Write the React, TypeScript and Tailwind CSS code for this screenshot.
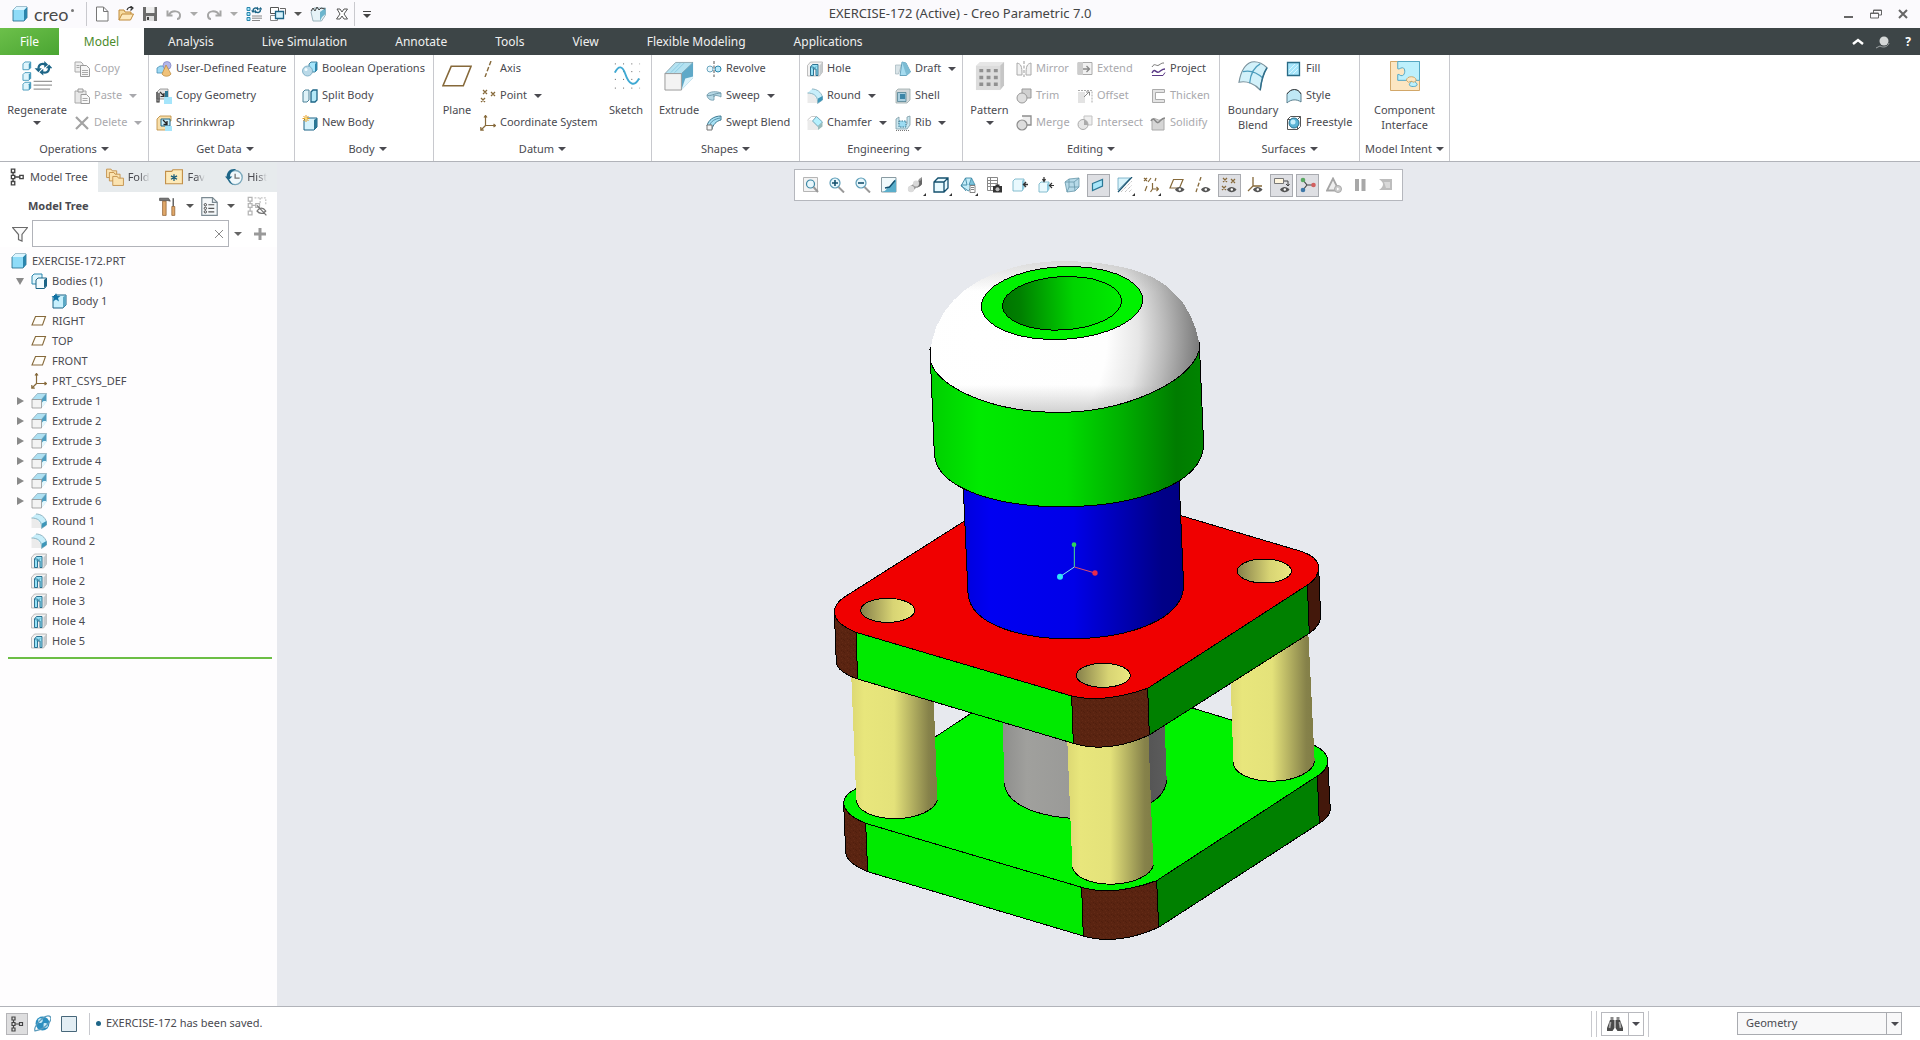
import { useState, type ReactNode } from 'react'
import { clsx } from 'clsx'

/* ---------- Icons (16 x 16 grid) ---------- */

const EDGE = '#1d6587'
const SKY = '#a5e5fb'
const BROWN = '#86693a'

const eye = (
  <>
    <path d="M6 12.500c2-3.500 7-3.500 9.500 0-2.500 3.500-7.500 3.500-9.500 0z" fill="#555" />
    <circle cx="10.800" cy="12.500" r="1.200" fill="#fff" />
  </>
)

const ICONS: Record<string, ReactNode> = {
  cube: (
    <>
      <path d="M1 4l3-3h11v10.500l-3 3.500H1z" fill="#8fdcf8" stroke={EDGE} strokeWidth=".8" />
      <path d="M12 4l3-3v10.500L12 15z" fill="#2b86ad" />
      <path d="M1 4l3-3h11l-3 3z" fill="#d9f5ff" />
    </>
  ),
  file: <path d="M2.500 1h7L14 5.500V15H2.500zM9.500 1v4.500H14" fill="#fff" stroke="#777" />,
  open: (
    <>
      <path d="M1 14V4h5l1 2h6v2" fill="#f7dca0" stroke="#c08a3a" />
      <path d="M1 14l3-6h11.500l-3 6z" fill="#fde9bd" stroke="#c08a3a" />
      <path d="M9 4c1-3 3-3 5-2M12.500 0L15 2l-2.500 2.500" fill="none" stroke="#333" strokeWidth="1.200" />
    </>
  ),
  save: (
    <>
      <path d="M1 1h14v14H1z" fill="#6b6b6b" />
      <path d="M4 1h8.500v6H4z" fill="#eee" />
      <path d="M4 10h8v5H4z" fill="#ddd" />
      <path d="M5 11h2v3H5z" fill="#444" />
    </>
  ),
  undo: <path d="M1.500 4.500v5h5M3 9c2-5 12-5 11 1-.3 2-1 3-3 3" fill="none" stroke="#a5a5a5" strokeWidth="2" />,
  redo: <path d="M14.500 4.500v5h-5M13 9C11 4 1 4 2 10c.3 2 1 3 3 3" fill="none" stroke="#a5a5a5" strokeWidth="2" />,
  regen: (
    <>
      <path d="M1 1.500h3v3H1zM1 6.500h3v3H1zM1 11.500h3v3H1z" fill={SKY} stroke="#2b86ad" />
      <path d="M7 5c0-3 3-4 5-2M14.500 3.500c0 3-3 4-5 2" fill="none" stroke={EDGE} strokeWidth="1.500" />
      <path d="M12.500 3.500h4L14.500 1zM5 4.500h4L7 7zM11 .5v4l2-1.500zM10 3.500v4L8 6z" fill={EDGE} />
      <path d="M6 10h10M6 12.200h10M6 14.500h8" stroke="#888" />
    </>
  ),
  windows: (
    <>
      <path d="M.5 1.500h8v6h-8z" fill="#fff" stroke="#555" />
      <path d="M.5 9.500h7v5h-7z" fill="#fff" stroke="#888" />
      <path d="M5.500 5.500h8v7h-8z" fill="#d4f2fc" stroke={EDGE} strokeWidth="1.300" />
      <path d="M10 2.500h5.500v6" fill="none" stroke="#666" />
    </>
  ),
  appearance: (
    <>
      <path d="M1 6l3-4h11.500v7l-4 6H3z" fill="#e6f3f7" stroke="#86a3ad" strokeWidth=".8" />
      <path d="M10 6l5.500-4v6L12 11l-2 4z" fill="#6cb5cd" />
      <path d="M1 5l2-3 2 3 2-4 2 3 2-2 4 1" fill="none" stroke="#444" />
    </>
  ),
  closeWin: (
    <path d="M3 3h3l2 3 2-3h3.500l-3.500 5 3.500 5H10l-2-3-2 3H2.500L6 8z" fill="#fff" stroke="#555" />
  ),
  copy: (
    <>
      <path d="M1 1h6l2 2v8H1z" fill="#eee" stroke="#aaa" />
      <path d="M6.500 4.500h6l3 3v8h-9z" fill="#f6f6f6" stroke="#999" />
      <path d="M8 9.500h6M8 11.500h6M8 13.500h6M2.500 4.500h3M2.500 6.500h3" stroke="#aaa" />
    </>
  ),
  paste: (
    <>
      <path d="M1 3h11v12H1z" fill="#e8e8e8" stroke="#aaa" />
      <path d="M4 1h5v3H4z" fill="#eee" stroke="#999" />
      <path d="M7 6.500h5.500l3 3v6H7z" fill="#f8f8f8" stroke="#999" />
      <path d="M8.500 10.500h5M8.500 12.500h5" stroke="#aaa" />
    </>
  ),
  del: <path d="M2 2l12 12M14 2L2 14" stroke="#a3a3a3" strokeWidth="2.200" />,
  udf: (
    <>
      <path d="M1 7l3-2h5v7H1z" fill="#9ed9f4" stroke="#4a90b5" strokeWidth=".8" />
      <circle cx="11" cy="4.500" r="4" fill="#b3b6e8" stroke="#7a7fc0" strokeWidth=".7" />
      <path d="M10 4l5 9c-2 3-7 3-9 0z" fill="#f0c27a" stroke="#b98535" strokeWidth=".7" />
    </>
  ),
  copyGeom: (
    <>
      <path d="M1 4l3-3h8v8l-3 2H1z" fill="#e3e3e3" stroke="#888" strokeWidth=".8" />
      <path d="M1 4v10h2V5M4 4l4 4M8 5v3.500H4.500" fill="none" stroke="#333" strokeWidth="1.200" />
      <path d="M8 9h8v7H8z" fill={SKY} />
      <path d="M9 3h3v6H9z" fill="#2b7896" />
    </>
  ),
  shrink: (
    <>
      <path d="M1 4l3-3h11v5h-4v9H1z" fill="#f8dfaa" stroke="#b98535" strokeWidth=".8" />
      <path d="M5 4h9v7H5z" fill="#c9effb" stroke={EDGE} />
      <path d="M7 5l4 4M11 6v3.500H7.500" fill="none" stroke="#222" strokeWidth="1.300" />
      <path d="M9 11h7v5H9z" fill={SKY} />
    </>
  ),
  boolean: (
    <>
      <path d="M7 3l2-2h6v8l-2 2H7z" fill="#a5e5fb" stroke={EDGE} strokeWidth=".8" />
      <path d="M13 3l2-2v8l-2 2z" fill="#2b86ad" />
      <circle cx="5.500" cy="10" r="5" fill="#b9d9e8" stroke="#6ea3bd" strokeWidth=".8" />
      <circle cx="4" cy="8.500" r="1.500" fill="#f2fbff" />
    </>
  ),
  split: (
    <>
      <path d="M1 4l2-2h4v10l-2 2H1z" fill="#dff2f8" stroke="#4d8299" />
      <path d="M9 4l2-2h4v10l-2 2H9z" fill="#b5e9f8" stroke={EDGE} strokeWidth="1.300" />
    </>
  ),
  newBody: (
    <>
      <path d="M2 5l2-2h11v9l-3 3H2z" fill="#d6f3fc" stroke={EDGE} />
      <path d="M12 5l3-2v9l-3 3z" fill="#2b7896" />
      <path d="M4 0v7M.5 3.500h7M1.500 1l5 5M6.500 1l-5 5" stroke="#e89a1c" />
      <circle cx="4" cy="3.500" r="1.300" fill="#ffe27a" />
    </>
  ),
  axis: <path d="M11 0L5 16" stroke={BROWN} strokeWidth="1.400" strokeDasharray="4.500 2" />,
  point: (
    <path
      d="M3 2l4 4M7 2L3 6M11 4l4 4M15 4l-4 4M1 10l4 4M5 10l-4 4"
      stroke={BROWN}
      strokeWidth="1.300"
    />
  ),
  csys: (
    <path
      d="M5.500 1v9.500H15M5.500 10.500l-4.500 4.500M4 2.500L5.500.5 7 2.500M13.500 9l2 1.500-2 1.500M.8 12v3.200h3"
      fill="none"
      stroke={BROWN}
      strokeWidth="1.200"
    />
  ),
  plane: <path d="M4.500 3.500H14.500L11.500 12H1z" fill="#fffdf8" stroke={BROWN} strokeWidth="1.100" />,
  revolve: (
    <>
      <circle cx="4" cy="8" r="3" fill="#e8f6fc" stroke="#6ba6bf" />
      <circle cx="12" cy="8" r="3" fill="#b9e9fa" stroke="#2b86ad" />
      <path d="M8 0v16" stroke="#555" strokeDasharray="3 1.500" />
    </>
  ),
  sweep: (
    <>
      <path d="M1 7c2-4 10-4 14-2v4c-4-2-7-2-7 0v3c-4 1-7-2-7-5z" fill="#b7d9e6" stroke="#6d97a8" strokeWidth=".8" />
      <path d="M1 7c3 2 8-2 14-2M8 9V7" fill="none" stroke="#6d97a8" />
    </>
  ),
  swept: (
    <>
      <path d="M1 11C2 5 8 1 15 1v4c-5 1-8 5-9 9z" fill="#a9e2f5" stroke="#3d7890" />
      <path d="M4 10c1-4 5-6 10-7" fill="none" stroke="#3d7890" strokeWidth=".8" />
      <path d="M1 10h5v5H1z" fill="#f5f5f5" stroke="#777" />
    </>
  ),
  extrude: (
    <>
      <path d="M1 6.500L6.500.5h9l-5 6z" fill="#aee0f2" stroke="#7796a2" strokeWidth=".6" />
      <path d="M10.500 6.500l5-6v8l-5 6z" fill="#4f9dbf" />
      <path d="M10.500 15l5-6v-1h-3l-2 2z" fill="#e4f7fd" />
      <path d="M1 6.500h9.500V15H1z" fill="#f3f3f3" stroke="#888" strokeWidth=".7" />
    </>
  ),
  hole: (
    <>
      <path d="M.5 4.500l3-3.500h12v10l-3 4H.5z" fill="#f2f2f2" stroke="#a5a5a5" strokeWidth=".7" />
      <path d="M12.500 4.500l3-3.500v10l-3 4z" fill="#c5cacc" />
      <path d="M3.500 14.500V6l2-2.500h5.500v11H9V8H6.500v6.500z" fill="#97e2f6" stroke={EDGE} strokeWidth=".9" />
      <path d="M3.500 6h3l-.5 2M6.500 8L9 5.500" fill="none" stroke={EDGE} strokeWidth=".7" />
    </>
  ),
  round: (
    <>
      <path d="M.5 5c5 0 9 3 10 10H.5z" fill="#ebebeb" />
      <path d="M.5 5L5 1c5 0 9 3 10.500 8l-5 6C10 8 6 5 .5 5z" fill="#c8eefa" />
      <path d="M5 1c5 0 9 3 10.500 8v3l-5 3.500V13c0-5-4-8-10-8" fill="none" stroke="#7aa4b4" strokeWidth=".8" />
      <path d="M11 10.500l4.500-2.500v4L11 15z" fill="#3d96b8" />
    </>
  ),
  chamfer: (
    <>
      <path d="M.5 5H4l7 6v4H.5z" fill="#ebebeb" />
      <path d="M5.500 6l4-4.500 6 5.500-4.500 4.500z" fill="#b5f0fd" stroke="#5b93a8" strokeWidth=".8" />
      <path d="M11 11.500L15.500 7v4.500L11 15z" fill="#9bb" />
      <path d="M.5 5l4-3.500h5" fill="none" stroke="#bbb" strokeWidth=".8" />
    </>
  ),
  draft: (
    <>
      <path d="M.5 4h6l-3 9h-3z" fill="#d9e4e8" stroke="#a1b4bb" strokeWidth=".7" />
      <path d="M7 1l4 1 4.500 9-4 3.500H5z" fill="#a6dcf0" stroke="#4c91ae" strokeWidth=".8" />
      <path d="M7 1l4.500 13.500L15.500 11 11 2z" fill="#7cbcd4" />
    </>
  ),
  shell: (
    <>
      <path d="M1 3l2-2h12v11l-3 3H1z" fill="#d5d9db" stroke="#9aa" strokeWidth=".8" />
      <path d="M2.500 4.500h8.500v9H2.500z" fill="#a9cfe0" stroke="#478" strokeWidth=".7" />
      <path d="M5 6h5v5H5z" fill="#3d86a8" />
    </>
  ),
  rib: (
    <>
      <path d="M1 4l3-2v7h8V2l3-1v9l-3 4H1z" fill="#c8e6ef" stroke="#7d9aa5" strokeWidth=".8" />
      <path d="M4 6h7v6H4z" fill="#9cdcf2" stroke="#3d7890" strokeDasharray="1.500 1" />
      <path d="M1 15.500h13" stroke="#777" strokeDasharray="1 1" />
    </>
  ),
  mirror: (
    <>
      <path d="M1 2c4 1 5 3 5 12H1zM15 2c-4 1-5 3-5 12h5z" fill="#f2f2f2" stroke="#aaa" />
      <path d="M8 0v16" stroke="#999" strokeDasharray="3 1.500" />
    </>
  ),
  extend: (
    <>
      <path d="M1 1.500h14v12H1z" fill="#f1f1f1" stroke="#aaa" />
      <path d="M1 1h5v13H1z" fill="#ccc" />
      <path d="M6 8h6M9.500 5l3 3-3 3" fill="none" stroke="#888" strokeWidth="1.300" />
    </>
  ),
  trim: (
    <>
      <path d="M6 1h9v9H6z" fill="#d0d0d0" stroke="#999" />
      <circle cx="6" cy="10" r="5" fill="#dedede" stroke="#999" />
    </>
  ),
  offset: (
    <>
      <path d="M1 4h7v11H1z" fill="#e3e3e3" />
      <path d="M1 2.500h14v12" fill="none" stroke="#aaa" strokeDasharray="2 1" />
      <path d="M7 9l5-5M9 4h3.500v3.500" fill="none" stroke="#888" />
    </>
  ),
  merge: (
    <>
      <path d="M6 1h9v9H9" fill="#eee" stroke="#8d8d8d" strokeWidth="1.300" />
      <circle cx="6" cy="10" r="5" fill="#ddd" stroke="#8d8d8d" strokeWidth="1.200" />
    </>
  ),
  intersect: (
    <>
      <path d="M7 1h8v9H7z" fill="#eee" stroke="#c3c3c3" />
      <circle cx="6" cy="9.500" r="5" fill="#e6e6e6" stroke="#aaa" />
      <path d="M7 5c3 0 4 3 4 5H7z" fill="#aaa" />
    </>
  ),
  project: (
    <>
      <path d="M2 6c3-5 4 0 7-2s3-2 5-2" fill="none" stroke="#777" />
      <path d="M2 12c3-6 4 1 7-1s3-3 6-3" fill="none" stroke="#5a3a86" strokeWidth="1.500" />
      <path d="M2 14.500h11l2-3" fill="none" stroke="#5a3a86" />
    </>
  ),
  thicken: <path d="M14.500 1.500h-12v13h12v-3h-9v-7h9z" fill="#e4e4e4" stroke="#aaa" />,
  solidify: (
    <>
      <path d="M2 5c3-5 6 4 12-2v12H2z" fill="#d6d6d6" stroke="#aaa" />
      <path d="M1 6c3-6 5 4 8 1 2-2 3-4 6-4" fill="none" stroke="#888" strokeWidth="1.600" />
    </>
  ),
  fill: (
    <>
      <path d="M1.500 1.500h12v13h-12z" fill="#a5e5fb" stroke="#2a6b86" strokeWidth="1.300" />
      <path d="M3 9l6-6M3 13l9-9M7 13l5-5" stroke="#d9f6ff" />
    </>
  ),
  style: (
    <>
      <path d="M1 6c4-6 11-6 14 0v8c-4-3-10-3-14 1z" fill="#c0e8f5" stroke="#5a7f8e" />
      <path d="M1 6c4-6 11-6 14 0" fill="none" stroke="#444" />
    </>
  ),
  freestyle: (
    <>
      <path d="M1.500 4.500l3-3h10v10l-3 3h-10zM1.500 4.500h10v10M11.500 4.500l3-3" fill="#fff" stroke="#555" />
      <circle cx="8" cy="8" r="5" fill="#5bb4d6" stroke="#27718f" />
      <circle cx="7" cy="7" r="2.500" fill="#c5effc" />
    </>
  ),
  treeTab: (
    <path
      d="M3 1h3v3H3zM3 6.500h3v3H3zM3 12h3v3H3zM10.500 6.500h3v3h-3zM4.500 4v2.500M4.500 9.500V12M6 8h4.500"
      fill="none"
      stroke="#444"
      strokeWidth="1.200"
    />
  ),
  folders: (
    <g fill="#fbe3b0" stroke="#c2904a" strokeWidth=".8">
      <path d="M.5 1h4l1 1.500h4v6h-9z" />
      <path d="M3 4h4l1 1.500h4.500v6H3z" />
      <path d="M6 7.500h4L11 9h4.500v6.500H6z" />
    </g>
  ),
  favorites: (
    <>
      <path d="M.5 3H6l1-1.500h8.500v12.500H.5z" fill="#fdeab9" stroke="#c2904a" />
      <path d="M8 5.500v6M5.300 7l5.400 3M10.700 7l-5.400 3" stroke="#145a78" strokeWidth="1.100" />
    </>
  ),
  history: (
    <>
      <circle cx="9" cy="8.500" r="6.300" fill="#f0f8fb" stroke="#7ba8bb" strokeWidth="1.200" />
      <path d="M9 5v4h4" fill="none" stroke="#777" strokeWidth="1.200" />
      <path d="M10 1C4.500 0 1.500 3.500 1.500 7.500H0L3 11l3.500-3.500H4.500C4.500 4.500 6 2.500 10 1zM2.500 10c1 3 4 5.500 8 5-3 .5-5-1.500-6-4z" fill="#1d6587" />
    </>
  ),
  tools: (
    <>
      <path d="M.5 1h7.500l1.500 2.500L7.500 3H.5z" fill="#777" stroke="#444" strokeWidth=".6" />
      <path d="M3 3.500h3V15.500H3z" fill="#e0a86a" stroke="#8a5a2b" strokeWidth=".6" />
      <path d="M12 1v7" stroke="#666" strokeWidth="1.300" />
      <path d="M10.800 8h2.500v7.500h-2.500z" fill="#e0a86a" stroke="#8a5a2b" strokeWidth=".6" />
    </>
  ),
  treeCols: (
    <>
      <path d="M1.500.5h9l4 4v11h-13z" fill="#f5f8fa" stroke="#7c8a92" />
      <path d="M10.500.5v4h4" fill="none" stroke="#7c8a92" />
      <circle cx="4.500" cy="6.500" r="1" fill="none" stroke="#444" strokeWidth=".8" />
      <circle cx="4.500" cy="9.500" r="1" fill="none" stroke="#444" strokeWidth=".8" />
      <circle cx="4.500" cy="12.500" r="1" fill="none" stroke="#444" strokeWidth=".8" />
      <path d="M7 6.500h5M7 9.500h5M7 12.500h5" stroke="#555" />
    </>
  ),
  treeHide: (
    <>
      <path
        d="M1 1h3v3H1zM1 6h3v3H1zM1 12h3v3H1zM2.500 4v2M2.500 9v3M4 7.500h3M7 6h3v3H7z"
        fill="none"
        stroke="#b5b5b5"
      />
      <path d="M6 1.500h9v6M10.500 1.500v5" fill="none" stroke="#c5c5c5" strokeDasharray="1.500 1" />
      <path d="M8 12c2-3 5-3 7 0-2 2.500-5 2.500-7 0zM8 7.500l7.500 8" fill="none" stroke="#777" />
    </>
  ),
  funnel: <path d="M.5 1.500h15L10 8.500V15l-3.500-1.500v-5z" fill="#fafafa" stroke="#6b6b6b" strokeWidth="1.200" />,
  bodies: (
    <>
      <path d="M1 3l2-2h8v8l-2 2H1z" fill="#dff5fc" stroke="#2b86ad" />
      <path d="M5 7l2-2h8.500v8l-2 2.500H5z" fill="#f3fcff" stroke={EDGE} />
      <path d="M13 7l2.500-2v8L13 15z" fill={EDGE} />
    </>
  ),
  body: (
    <>
      <path d="M2 4l2-2h11v10l-3 3H2z" fill="#c8f0fd" stroke={EDGE} />
      <path d="M12 4l3-2v10l-3 3z" fill="#5ba8c5" />
      <path d="M5 0l1.200 3H9.500L7 5l1 3.500L5 6.500l-3 2L3 5 .5 3h3.300z" fill="#1173a5" />
    </>
  ),
  globe: (
    <>
      <circle cx="8" cy="8" r="6.500" fill="#2b8fc0" />
      <path d="M4 4c3-2 5 0 4 2s-4 2-4 0zM9 8c2-1 4 0 4 2s-3 3-4 1z" fill="#c9ecf8" />
      <path d="M1 15C-1 11 10-1 14.500 1S12 13 1 15z" fill="none" stroke="#5c9cbc" strokeWidth="1.200" />
    </>
  ),
  screen: <path d="M.5.5h15v15H.5z" fill="#e3eef4" stroke="#47677a" />,
  binoculars: (
    <>
      <path d="M3.500 1h3v3h-3zM9.500 1h3v3h-3z" fill="#888" />
      <path d="M3 4h4.500v8l-2 3H0v-3zM13 4H8.500v8l2 3H16v-3z" fill="#4a4a4a" />
      <path d="M3.500 6L2.500 12M12.500 6l1 6" stroke="#aaa" strokeWidth="1.800" />
    </>
  ),

  /* graphics toolbar */
  refit: (
    <>
      <path d="M.5.500h14v14H.5z" fill="#f3f3f3" stroke="#b5b5b5" />
      <circle cx="7.500" cy="7" r="4" fill="#e8f7fc" stroke="#3d88a5" strokeWidth="1.200" />
      <path d="M10.500 10l4.500 5" stroke="#999" strokeWidth="2" />
    </>
  ),
  zoomIn: (
    <>
      <circle cx="6" cy="6" r="5" fill="#e8f7fc" stroke="#5d9db8" strokeWidth="1.200" />
      <path d="M3 6h6M6 3v6" stroke="#14506e" strokeWidth="1.600" />
      <path d="M9.500 10l5.500 5.500" stroke="#999" strokeWidth="2" />
    </>
  ),
  zoomOut: (
    <>
      <circle cx="6" cy="6" r="5" fill="#e8f7fc" stroke="#5d9db8" strokeWidth="1.200" />
      <path d="M3 6h6" stroke="#14506e" strokeWidth="1.600" />
      <path d="M9.500 10l5.500 5.500" stroke="#999" strokeWidth="2" />
    </>
  ),
  repaint: (
    <>
      <path d="M.5.500h14.500v14.500H.5z" fill="#f1fafc" stroke="#8a9ba2" />
      <path d="M15 2v13H1c5-1 4-4 7-5z" fill="#5aaecb" />
      <path d="M4 11l4.500-1L14 3.500" fill="none" stroke="#14506e" strokeWidth="1.400" />
    </>
  ),
  render: (
    <>
      <path d="M1 12c1-4 4-3 5-5s5-1 6-5l3-2v7c-3 4-6 3-8 6-2 3-6 2-6-1z" fill="#9a9a9a" />
      <circle cx="4" cy="12" r="3.200" fill="#dcdcdc" />
      <circle cx="9" cy="6.500" r="3" fill="#d8d8d8" />
      <path d="M12 4c2 0 3-2 3-4v7c-2 3-4 3-5 4 2-2 3-4 2-7z" fill="#666" />
    </>
  ),
  display: (
    <path d="M1 5l4-4h10v10l-4 4H1zM1 5h10v10M11 5l4-4" fill="#e8faff" stroke="#14506e" strokeWidth="1.300" />
  ),
  saved: (
    <>
      <path d="M1 9l4.500-8h6v9l-3 4z" fill="#c4edf9" stroke="#3d88a5" strokeWidth=".9" />
      <path d="M5.500 1L7 8H1l5 6" fill="none" stroke="#3d88a5" strokeWidth=".9" />
      <path d="M11.500 1L15 8H9z" fill="#7cc4dc" stroke="#3d88a5" strokeWidth=".8" />
      <path d="M10 8.500h5v7h-5zM11 10.500h3M11 12.500h3" fill="#fff" stroke="#777" strokeWidth=".9" />
    </>
  ),
  viewMgr: (
    <>
      <path d="M1.500.5h10v13h-10zM1.500 3.500h10M1.500 6.500h10M1.500 9.500h10M4.500.5v13" fill="#fff" stroke="#888" />
      <path d="M7 9h9v6.500H7zM9.500 7.500h4V9h-4z" fill="#333" />
      <circle cx="11.500" cy="12.200" r="2" fill="#bbb" />
    </>
  ),
  annoA: (
    <>
      <path d="M1 4l2-2h9v9l-2 3H1z" fill="#e9f9fe" stroke="#79b5ca" strokeWidth=".9" />
      <path d="M10 4l2-2v9l-2 3z" fill="#8cc9de" />
      <path d="M16 7.500h-4M14 5l-2.500 2.500L14 10" fill="none" stroke="#333" strokeWidth="1.400" />
    </>
  ),
  annoB: (
    <>
      <path d="M1 7l2-2h8v7l-2 3H1z" fill="#e9f9fe" stroke="#79b5ca" strokeWidth=".9" />
      <path d="M9 7l2-2v7l-2 3z" fill="#8cc9de" />
      <path
        d="M6 0v4M4.500 2L6 4.500 7.500 2M16 8.500h-4M14 6l-2.500 2.500L14 11"
        fill="none"
        stroke="#333"
        strokeWidth="1.200"
      />
    </>
  ),
  trans: (
    <>
      <path d="M1 5l4-3 10-1v9l-4 4-8 1z" fill="#b7dae8" stroke="#6797aa" strokeWidth=".8" />
      <path d="M1 5h9l1 9M10 5l5-4M5 2v8l-2 5M5 10l10 0" fill="none" stroke="#6797aa" strokeWidth=".8" />
    </>
  ),
  perspective: <path d="M2.500 6.500l10-4v6.500l-10 4.500z" fill="#a8e6fa" stroke="#2b7896" strokeWidth="1.200" />,
  section: (
    <>
      <path d="M1 1h12L1 13z" fill="#d9f4fc" stroke="#6ba6bf" strokeWidth=".8" />
      <path d="M15 0L1 15" stroke="#14506e" strokeWidth="1.300" />
      <path d="M4 15L15 4M8 15l7-7M12 15l3-3" stroke="#aaa" strokeDasharray="1 1" />
    </>
  ),
  datums: (
    <path
      d="M1 1l3 3M4 1L1 4M8 1L5 5M4 9l-2 5M13 1l-1 3M9.500 6v6H15M9.500 12l-2 3M13.500 10l2 2-2 2"
      fill="none"
      stroke={BROWN}
      strokeWidth="1.200"
    />
  ),
  planeShow: (
    <>
      <path d="M4.500 2.500H14L10.500 11H1z" fill="#fff" stroke={BROWN} strokeWidth="1.200" />
      {eye}
    </>
  ),
  axisShow: (
    <>
      <path d="M6 0L1 15" stroke={BROWN} strokeWidth="1.300" strokeDasharray="4 2" />
      {eye}
    </>
  ),
  pointShow: (
    <>
      <path d="M2 1l4 4M6 1L2 5M10 2l4 4M14 2l-4 4M1 9l4 4M5 9l-4 4" stroke={BROWN} strokeWidth="1.200" />
      {eye}
    </>
  ),
  csysShow: (
    <>
      <path d="M6 0v9h9M6 9l-5 5" fill="none" stroke={BROWN} strokeWidth="1.300" />
      {eye}
    </>
  ),
  annoShow: (
    <>
      <path d="M.5 1.500h9v5h-9z" fill="#fff6df" stroke="#777" />
      <path d="M10 4h4v5M12 7l2 2 1.500-2" fill="none" stroke="#444" />
      {eye}
    </>
  ),
  spin: (
    <>
      <path d="M3 3l4 5h7M7 8l-4 5" fill="none" stroke="#444" strokeWidth="1.200" />
      <circle cx="3" cy="3" r="2.300" fill="#5aa862" />
      <circle cx="13.500" cy="8" r="2.300" fill="#d26060" />
      <circle cx="3" cy="13" r="2.300" fill="#3f78a8" />
    </>
  ),
  simulate: (
    <>
      <path d="M7 1.500l6 12H1z" fill="#eee" stroke="#a5a5a5" strokeWidth="1.800" />
      <circle cx="12" cy="12" r="3.500" fill="#ccc" stroke="#aaa" />
      <path d="M11 10.500l2.500 1.500-2.500 1.500z" fill="#fff" />
    </>
  ),
  pause: <path d="M3 2h4v12H3zM9.500 2h4v12h-4z" fill="#a8a8a8" />,
  stopSim: (
    <>
      <path d="M1 2h13v11H1c3-2 4-4 4-6S3 4 1 2z" fill="#bdbdbd" />
      <path d="M6 5h6v6H8z" fill="#d9d9d9" />
    </>
  ),
}

function Icon({ name, className }: { name: string; className?: string }) {
  return (
    <svg viewBox="0 0 16 16" fill="none" aria-hidden="true" className={clsx('shrink-0', className ?? 'size-4')}>
      {ICONS[name]}
    </svg>
  )
}

/* ---------- Large ribbon icons (31 x 31 grid) ---------- */

const BIG_ICONS: Record<string, ReactNode> = {
  regenerate: (
    <>
      {[1, 12, 22].map((y) => (
        <g key={y} transform={`translate(0 ${y})`}>
          <path d="M1 2l2-2h6v6L7 8H1z" fill="#dff5fc" stroke="#3d94b8" strokeWidth=".9" />
          <path d="M7 2l2-2v6L7 8z" fill="#3d94b8" />
        </g>
      ))}
      <path d="M17 8c0-5 4-6 8-4M28 7c0 5-4 6-8 4" fill="none" stroke="#1d6587" strokeWidth="2.200" />
      <path d="M13 7.500h7.500L17 11.500zM24.500 7.500h7L28 3.500zM23 0v7l4-3zM22 8v7l-4-3.500z" fill="#1d6587" />
      <path d="M12 21h19M12 25h19M12 29h17" stroke="#999" strokeWidth="1.300" />
    </>
  ),
  plane: <path d="M9.500 5.500H30L22 25.500H1z" fill="#fff" stroke={BROWN} strokeWidth="1.600" />,
  sketch: (
    <>
      {[3, 11, 19, 28].map((y) => (
        <path key={y} d={`M4 ${y}h26`} stroke="#555" strokeDasharray="1 7.500" />
      ))}
      <path d="M4 12c4-8 8-7 11 2s9 14 14 4" fill="none" stroke="#3fa9d3" strokeWidth="2" />
    </>
  ),
  extrude: (
    <>
      <path d="M1 13L12 1.500h18L18 13z" fill="#b4e2f1" stroke="#7d97a2" strokeWidth=".8" />
      <path d="M18 13L30 1.500v16L18 30z" fill="#5fa9c8" />
      <path d="M18 30l12-12.500v-1.500l-8 2z" fill="#dff4fb" />
      <path d="M7 12L17 2M11 12L21 2" stroke="#8ccbe2" />
      <path d="M1 13h17v17H1z" fill="#f3f3f3" stroke="#999" />
    </>
  ),
  pattern: (
    <>
      <path d="M1 5l4-4h25v24l-4 5H1z" fill="#e6e6e6" />
      <path d="M26 5l4-4v24l-4 5z" fill="#c6c6c6" />
      <path d="M1 5h25v25H1z" fill="#dcdcdc" />
      {[10, 17, 24].map((y) => (
        <path key={y} d={`M4.500 ${y}h4M12 ${y}h4M19.500 ${y}h4`} stroke="#909090" strokeWidth="3.500" />
      ))}
    </>
  ),
  boundary: (
    <>
      <path
        d="M1 22C3 10 8 3 14 1c6-1 12 2 16 6-4 6-6 14-7 23-5-6-14-10-22-8z"
        fill="#d2f1fa"
        stroke="#7a929d"
        strokeWidth="1.200"
      />
      <path d="M12 23C13 13 17 6 23 3M5 11c8-2 15 1 21 7" fill="none" stroke="#4d9dbd" strokeWidth="1.300" />
      <path d="M30 7c-4 6-6 14-7 23" fill="none" stroke="#2f6f8c" strokeWidth="1.500" />
    </>
  ),
  component: (
    <>
      <path d="M.5.500h30v30H.5z" fill="#fce6c2" stroke="#d0a362" />
      <path
        d="M8 .5h22.500V20h-5c0 3 2.500 2 2.500 4.500s-8 2.500-8 0 2.500-1.500 2.500-4.500H8v-6c2-1 2 2 5 1s3-8 0-8-3 2-5 1z"
        fill="#bdf0fc"
        stroke="#4fa5c4"
      />
      <path d="M17 20c0-5 10-5 10 0l-2 2-3-1-3 1z" fill="#fce6c2" stroke="#c9974e" strokeWidth=".8" />
    </>
  ),
}

function Caret({ className }: { className?: string }) {
  return (
    <svg viewBox="0 0 8 4" aria-hidden="true" className={clsx('h-1 w-2 shrink-0', className)}>
      <path d="M0 0h8L4 4z" fill="currentColor" />
    </svg>
  )
}

/* ---------- Title bar ---------- */

function QuickButton({ icon, label }: { icon: string; label: string }) {
  return (
    <button type="button" aria-label={label} className="flex size-4 items-center justify-center">
      <Icon name={icon} />
    </button>
  )
}

function TitleBar() {
  return (
    <header className="grid h-7 grid-cols-[1fr_auto_1fr] items-center bg-[#fbfafd] text-[#555]">
      <div className="flex items-center pl-3">
        <Icon name="cube" />
        <span className="ml-1.5 font-['Lato',sans-serif] text-lg leading-5 text-[#4a4a4a]">creo</span>
        <span className="mb-2 ml-0.5 size-[3px] rounded-full bg-[#777]" />
        <span className="ml-3 h-6 w-px bg-[#c9c9ce]" />
        <div className="ml-[7px] flex items-center gap-2">
          <QuickButton icon="file" label="New" />
          <QuickButton icon="open" label="Open" />
          <QuickButton icon="save" label="Save" />
          <QuickButton icon="undo" label="Undo" />
          <Caret className="text-[#aaa]" />
          <QuickButton icon="redo" label="Redo" />
          <Caret className="text-[#aaa]" />
          <QuickButton icon="regen" label="Regenerate" />
          <QuickButton icon="windows" label="Windows" />
          <Caret />
          <QuickButton icon="appearance" label="Appearance" />
          <QuickButton icon="closeWin" label="Close window" />
        </div>
        <span className="ml-1 h-6 w-px bg-[#c9c9ce]" />
        <button type="button" aria-label="Customize toolbar" className="ml-2 flex flex-col items-center gap-0.5">
          <span className="h-px w-2 bg-[#444]" />
          <Caret className="text-[#444]" />
        </button>
      </div>
      <h1 className="text-[13px] text-[#444]">EXERCISE-172 (Active) - Creo Parametric 7.0</h1>
      <div className="flex justify-end gap-4 pr-3 text-[#666]">
        <button type="button" aria-label="Minimize">
          <svg viewBox="0 0 10 10" className="size-2.5"><path d="M0 8h9" stroke="currentColor" strokeWidth="2" /></svg>
        </button>
        <button type="button" aria-label="Restore">
          <svg viewBox="0 0 12 10" className="h-2.5 w-3" fill="none" stroke="currentColor">
            <path d="M3.500 4V1h8v5h-3M3 1.500h8.500" />
            <path d="M.5 4h8v5h-8zM.5 4.500h8" />
          </svg>
        </button>
        <button type="button" aria-label="Close">
          <svg viewBox="0 0 10 10" className="size-2.5"><path d="M1 1l8 8M9 1L1 9" stroke="currentColor" strokeWidth="2" /></svg>
        </button>
      </div>
    </header>
  )
}

/* ---------- Ribbon ---------- */

const TABS = ['Analysis', 'Live Simulation', 'Annotate', 'Tools', 'View', 'Flexible Modeling', 'Applications']

function TabBar() {
  return (
    <nav className="flex h-[27px] items-stretch bg-[#3d4547] text-xs text-[#f0f0f0]">
      <button type="button" className="w-[59px] bg-linear-to-br from-[#6cc04a] to-[#4aa532] text-white">File</button>
      <button type="button" className="w-[85px] bg-white text-[#4b8b2b]">Model</button>
      {TABS.map((tab) => (
        <button key={tab} type="button" className="px-6">{tab}</button>
      ))}
      <div className="ml-auto flex items-center gap-3 pr-1.5">
        <button type="button" aria-label="Minimize ribbon">
          <svg viewBox="0 0 12 8" className="h-2 w-3"><path d="M1 6l5-4 5 4" fill="none" stroke="#fff" strokeWidth="2.500" /></svg>
        </button>
        <button type="button" aria-label="Learning connector">
          <svg viewBox="0 0 14 14" className="size-3.5">
            <circle cx="8" cy="6" r="4.500" fill="#d5d8d8" />
            <path d="M0 13l4-2c3 2 8 1 9-3" fill="none" stroke="#9ea3a4" />
          </svg>
        </button>
        <button type="button" className="w-3 font-bold text-white">?</button>
      </div>
    </nav>
  )
}

type Command = { icon: string; label: string; caret?: boolean; off?: boolean }
type Block =
  | { kind: 'big'; icon: string; label: string; width: string; caret?: boolean }
  | { kind: 'list'; width: string; items: Command[] }
type Group = { name: string; width: string; blocks: Block[] }

const GROUPS: Group[] = [
  {
    name: 'Operations',
    width: 'w-[149px]',
    blocks: [
      { kind: 'big', icon: 'regenerate', label: 'Regenerate', width: 'w-[74px]', caret: true },
      {
        kind: 'list',
        width: 'w-[74px]',
        items: [
          { icon: 'copy', label: 'Copy', off: true },
          { icon: 'paste', label: 'Paste', off: true, caret: true },
          { icon: 'del', label: 'Delete', off: true, caret: true },
        ],
      },
    ],
  },
  {
    name: 'Get Data',
    width: 'w-[146px] pl-[7px]',
    blocks: [
      {
        kind: 'list',
        width: 'w-[138px]',
        items: [
          { icon: 'udf', label: 'User-Defined Feature' },
          { icon: 'copyGeom', label: 'Copy Geometry' },
          { icon: 'shrink', label: 'Shrinkwrap' },
        ],
      },
    ],
  },
  {
    name: 'Body',
    width: 'w-[139px] pl-[7px]',
    blocks: [
      {
        kind: 'list',
        width: 'w-[131px]',
        items: [
          { icon: 'boolean', label: 'Boolean Operations' },
          { icon: 'split', label: 'Split Body' },
          { icon: 'newBody', label: 'New Body' },
        ],
      },
    ],
  },
  {
    name: 'Datum',
    width: 'w-[218px]',
    blocks: [
      { kind: 'big', icon: 'plane', label: 'Plane', width: 'w-[46px]' },
      {
        kind: 'list',
        width: 'w-[122px]',
        items: [
          { icon: 'axis', label: 'Axis' },
          { icon: 'point', label: 'Point', caret: true },
          { icon: 'csys', label: 'Coordinate System' },
        ],
      },
      { kind: 'big', icon: 'sketch', label: 'Sketch', width: 'w-[48px]' },
    ],
  },
  {
    name: 'Shapes',
    width: 'w-[148px]',
    blocks: [
      { kind: 'big', icon: 'extrude', label: 'Extrude', width: 'w-[54px]' },
      {
        kind: 'list',
        width: 'w-[92px]',
        items: [
          { icon: 'revolve', label: 'Revolve' },
          { icon: 'sweep', label: 'Sweep', caret: true },
          { icon: 'swept', label: 'Swept Blend' },
        ],
      },
    ],
  },
  {
    name: 'Engineering',
    width: 'w-[163px] pl-[7px]',
    blocks: [
      {
        kind: 'list',
        width: 'w-[88px]',
        items: [
          { icon: 'hole', label: 'Hole' },
          { icon: 'round', label: 'Round', caret: true },
          { icon: 'chamfer', label: 'Chamfer', caret: true },
        ],
      },
      {
        kind: 'list',
        width: 'w-[66px]',
        items: [
          { icon: 'draft', label: 'Draft', caret: true },
          { icon: 'shell', label: 'Shell' },
          { icon: 'rib', label: 'Rib', caret: true },
        ],
      },
    ],
  },
  {
    name: 'Editing',
    width: 'w-[257px]',
    blocks: [
      { kind: 'big', icon: 'pattern', label: 'Pattern', width: 'w-[53px]', caret: true },
      {
        kind: 'list',
        width: 'w-[61px]',
        items: [
          { icon: 'mirror', label: 'Mirror', off: true },
          { icon: 'trim', label: 'Trim', off: true },
          { icon: 'merge', label: 'Merge', off: true },
        ],
      },
      {
        kind: 'list',
        width: 'w-[73px]',
        items: [
          { icon: 'extend', label: 'Extend', off: true },
          { icon: 'offset', label: 'Offset', off: true },
          { icon: 'intersect', label: 'Intersect', off: true },
        ],
      },
      {
        kind: 'list',
        width: 'w-[68px]',
        items: [
          { icon: 'project', label: 'Project' },
          { icon: 'thicken', label: 'Thicken', off: true },
          { icon: 'solidify', label: 'Solidify', off: true },
        ],
      },
    ],
  },
  {
    name: 'Surfaces',
    width: 'w-[140px]',
    blocks: [
      { kind: 'big', icon: 'boundary', label: 'Boundary Blend', width: 'w-[66px]' },
      {
        kind: 'list',
        width: 'w-[72px]',
        items: [
          { icon: 'fill', label: 'Fill' },
          { icon: 'style', label: 'Style' },
          { icon: 'freestyle', label: 'Freestyle' },
        ],
      },
    ],
  },
  {
    name: 'Model Intent',
    width: 'w-[90px]',
    blocks: [{ kind: 'big', icon: 'component', label: 'Component Interface', width: 'w-[89px]' }],
  },
]

function RibbonBlock({ block }: { block: Block }) {
  if (block.kind === 'big') {
    return (
      <button type="button" className={clsx('flex flex-col items-center pt-1.5', block.width)}>
        <svg viewBox="0 0 31 31" fill="none" aria-hidden="true" className="size-[30px] shrink-0">
          {BIG_ICONS[block.icon]}
        </svg>
        <span className="mt-[11px] leading-[15px]">{block.label}</span>
        {block.caret && <Caret className="mt-1" />}
      </button>
    )
  }

  return (
    <div className={clsx('flex flex-col', block.width)}>
      {block.items.map((item) => (
        <button
          key={item.label}
          type="button"
          disabled={item.off}
          className="flex h-[27px] items-center gap-1 whitespace-nowrap disabled:text-[#a9a9ad]"
        >
          <Icon name={item.icon} />
          {item.label}
          {item.caret && <Caret className="ml-[3px]" />}
        </button>
      ))}
    </div>
  )
}

function Ribbon() {
  return (
    <div className="flex h-[107px] border-b border-[#b1b3b9] bg-white text-[11px] text-[#4a4a50]">
      {GROUPS.map((group) => (
        <section key={group.name} className={clsx('flex shrink-0 flex-col border-r border-[#c8c9ce]', group.width)}>
          <div className="flex h-[83px]">
            {group.blocks.map((block, i) => (
              <RibbonBlock key={i} block={block} />
            ))}
          </div>
          <button type="button" className="mx-auto flex h-[22px] items-center gap-1 whitespace-nowrap">
            {group.name}
            <Caret />
          </button>
        </section>
      ))}
    </div>
  )
}

/* ---------- Model tree ---------- */

const SIDE_TABS = [
  { icon: 'folders', label: 'Fold', title: 'Folder Browser' },
  { icon: 'favorites', label: 'Fav', title: 'Favorites' },
  { icon: 'history', label: 'Hist', title: 'History' },
]

type Node = { icon: string; label: string; level: 0 | 1 | 2; toggle?: 'open' | 'closed' }

const TREE: Node[] = [
  { icon: 'cube', label: 'EXERCISE-172.PRT', level: 0 },
  { icon: 'bodies', label: 'Bodies (1)', level: 1, toggle: 'open' },
  { icon: 'body', label: 'Body 1', level: 2 },
  { icon: 'plane', label: 'RIGHT', level: 1 },
  { icon: 'plane', label: 'TOP', level: 1 },
  { icon: 'plane', label: 'FRONT', level: 1 },
  { icon: 'csys', label: 'PRT_CSYS_DEF', level: 1 },
  ...[1, 2, 3, 4, 5, 6].map((n): Node => ({ icon: 'extrude', label: `Extrude ${n}`, level: 1, toggle: 'closed' })),
  ...[1, 2].map((n): Node => ({ icon: 'round', label: `Round ${n}`, level: 1 })),
  ...[1, 2, 3, 4, 5].map((n): Node => ({ icon: 'hole', label: `Hole ${n}`, level: 1 })),
]

const INDENT = ['pl-[11px]', 'pl-4', 'pl-[51px]']

function TreeRow({ node }: { node: Node }) {
  return (
    <li className={clsx('flex h-5 items-center', INDENT[node.level])}>
      {node.level === 1 && (
        <span className="flex w-[15px] items-center text-[#8a8a8a]">
          {node.toggle && (
            <svg viewBox="0 0 8 8" aria-hidden="true" className="size-2">
              <path d={node.toggle === 'open' ? 'M0 1h8L4 8z' : 'M1 0l7 4-7 4z'} fill="currentColor" />
            </svg>
          )}
        </span>
      )}
      <Icon name={node.icon} />
      <span className="ml-[5px]">{node.label}</span>
    </li>
  )
}

function Sidebar() {
  const [query, setQuery] = useState('')

  return (
    <aside className="flex w-[277px] shrink-0 flex-col bg-[#fefdfe] text-[11px] text-[#4a4a50]">
      <div className="flex h-[30px] bg-[#e7ebed]">
        <button type="button" className="flex w-[98px] items-center gap-1 bg-white pl-2 whitespace-nowrap">
          <Icon name="treeTab" className="size-[18px]" />
          Model Tree
        </button>
        {SIDE_TABS.map((tab) => (
          <button key={tab.icon} type="button" title={tab.title} className="flex w-[60px] items-center gap-1 pl-2">
            <Icon name={tab.icon} className="size-[18px]" />
            <span className="[mask-image:linear-gradient(to_right,black_50%,transparent)]">{tab.label}</span>
          </button>
        ))}
      </div>

      <div className="flex h-[28px] items-center bg-white pl-7 text-[#555]">
        <h2 className="w-[131px] text-[11px] font-bold text-[#4a4a50]">Model Tree</h2>
        <button type="button" aria-label="Settings" className="flex items-center gap-2">
          <Icon name="tools" className="size-[19px]" />
          <Caret />
        </button>
        <button type="button" aria-label="Show" className="ml-1.5 flex items-center gap-2">
          <Icon name="treeCols" className="size-[19px]" />
          <Caret />
        </button>
        <button type="button" aria-label="Hide tree" className="ml-3">
          <Icon name="treeHide" className="size-5" />
        </button>
      </div>

      <div className="flex h-[27px] items-center bg-white pl-3 text-[#666]">
        <Icon name="funnel" />
        <div className="ml-1 flex h-[27px] w-[197px] items-center border border-[#b1b3b9] bg-white">
          <input
            type="text"
            aria-label="Filter tree"
            value={query}
            onChange={(e) => setQuery(e.target.value)}
            className="h-full w-[182px] px-1 outline-none"
          />
          <button type="button" aria-label="Clear" onClick={() => setQuery('')}>
            <svg viewBox="0 0 8 8" className="size-2"><path d="M0 0l8 8M8 0L0 8" stroke="#888" /></svg>
          </button>
        </div>
        <Caret className="ml-[5px]" />
        <button type="button" aria-label="Add filter" className="ml-3">
          <svg viewBox="0 0 12 12" className="size-3"><path d="M6 0v12M0 6h12" stroke="#999" strokeWidth="3" /></svg>
        </button>
      </div>

      <ul className="pt-1">
        {TREE.map((node) => (
          <TreeRow key={node.label} node={node} />
        ))}
      </ul>
      <div className="mt-1.5 mr-[5px] ml-2 h-0.5 bg-[#6cbe45]" />
    </aside>
  )
}

/* ---------- Graphics area ---------- */

const VIEW_TOOLS: { icon: string; label: string; on?: boolean; menu?: boolean }[] = [
  { icon: 'refit', label: 'Refit' },
  { icon: 'zoomIn', label: 'Zoom in' },
  { icon: 'zoomOut', label: 'Zoom out' },
  { icon: 'repaint', label: 'Repaint' },
  { icon: 'render', label: 'Rendering options', menu: true },
  { icon: 'display', label: 'Display style', menu: true },
  { icon: 'saved', label: 'Saved orientations', menu: true },
  { icon: 'viewMgr', label: 'View manager' },
  { icon: 'annoA', label: 'View normal' },
  { icon: 'annoB', label: 'Orient' },
  { icon: 'trans', label: 'Transparency' },
  { icon: 'perspective', label: 'Perspective', on: true },
  { icon: 'section', label: 'Sections', menu: true },
  { icon: 'datums', label: 'Datum display filters', menu: true },
  { icon: 'planeShow', label: 'Plane display' },
  { icon: 'axisShow', label: 'Axis display' },
  { icon: 'pointShow', label: 'Point display', on: true },
  { icon: 'csysShow', label: 'Csys display' },
  { icon: 'annoShow', label: 'Annotation display', on: true },
  { icon: 'spin', label: 'Spin center', on: true },
  { icon: 'simulate', label: 'Simulate' },
  { icon: 'pause', label: 'Pause' },
  { icon: 'stopSim', label: 'Stop' },
]

function ViewToolbar() {
  return (
    <div className="mt-[7px] flex h-8 w-[609px] items-center justify-between border border-[#b5b7bd] bg-white px-1">
      {VIEW_TOOLS.map((tool) => (
        <button
          key={tool.icon}
          type="button"
          aria-label={tool.label}
          className={clsx(
            'relative flex size-[23px] items-center justify-center border',
            tool.on ? 'border-[#a9abb0] bg-[#dedfe3]' : 'border-transparent'
          )}
        >
          <Icon name={tool.icon} />
          {tool.menu && (
            <svg viewBox="0 0 3 3" className="absolute right-0 bottom-0 size-[3px]"><path d="M3 0v3H0z" fill="#333" /></svg>
          )}
        </button>
      ))}
    </div>
  )
}

const CAP =
  'M330 350C335 190 480 63 740 63C900 66 990 100 1040 138L1090 190C1125 245 1138 290 1138 330C1110 430 910 517 715 517C500 517 330 430 330 350Z'

function Part() {
  return (
    <svg
      viewBox="0 0 1671 2160"
      role="img"
      aria-label="EXERCISE-172 part"
      shapeRendering="crispEdges"
      className="mt-[39px] h-[720px] w-[557px]"
    >
      <defs>
        <linearGradient id="yellow">
          <stop offset="0" stopColor="#dcd873" />
          <stop offset=".15" stopColor="#e8e67c" />
          <stop offset=".5" stopColor="#e4e27a" />
          <stop offset=".9" stopColor="#86824a" />
          <stop offset="1" stopColor="#807c46" />
        </linearGradient>
        <linearGradient id="bore">
          <stop offset="0" stopColor="#857f4a" />
          <stop offset=".6" stopColor="#d8d474" />
          <stop offset="1" stopColor="#ebe880" />
        </linearGradient>
        <linearGradient id="steel">
          <stop offset="0" stopColor="#8e8e8c" />
          <stop offset=".15" stopColor="#a0a09d" />
          <stop offset=".5" stopColor="#989896" />
          <stop offset=".9" stopColor="#565656" />
          <stop offset="1" stopColor="#5c5c5c" />
        </linearGradient>
        <linearGradient id="blue">
          <stop offset="0" stopColor="#0000dc" />
          <stop offset=".12" stopColor="#0000f2" />
          <stop offset=".5" stopColor="#0000e8" />
          <stop offset=".9" stopColor="#000088" />
          <stop offset="1" stopColor="#000082" />
        </linearGradient>
        <linearGradient id="collar">
          <stop offset="0" stopColor="#00ce00" />
          <stop offset=".18" stopColor="#00ea00" />
          <stop offset=".5" stopColor="#00dc00" />
          <stop offset=".7" stopColor="#00b000" />
          <stop offset=".9" stopColor="#007c00" />
          <stop offset="1" stopColor="#008400" />
        </linearGradient>
        <linearGradient id="well">
          <stop offset="0" stopColor="#007400" />
          <stop offset=".15" stopColor="#008000" />
          <stop offset=".6" stopColor="#00d400" />
          <stop offset="1" stopColor="#00ec00" />
        </linearGradient>
        <radialGradient id="dome" gradientUnits="userSpaceOnUse" cx="480" cy="290" r="680">
          <stop offset="0" stopColor="#fff" />
          <stop offset=".56" stopColor="#fefefe" />
          <stop offset=".7" stopColor="#e6e6e6" />
          <stop offset=".82" stopColor="#b8b8b8" />
          <stop offset=".96" stopColor="#7d7d7d" />
        </radialGradient>
        <linearGradient id="domeShade" x1="0" y1="0" x2="0" y2="1">
          <stop offset="0" stopColor="#999" stopOpacity=".35" />
          <stop offset=".2" stopColor="#999" stopOpacity="0" />
          <stop offset=".82" stopColor="#999" stopOpacity="0" />
          <stop offset="1" stopColor="#999" stopOpacity=".45" />
        </linearGradient>
        <pattern id="rust" width="18" height="18" patternUnits="userSpaceOnUse">
          <path d="M0 0h18v18H0z" fill="#5a2411" />
          <path d="M3 3h3v3H3zM12 0h3v3h-3zM9 12h3v3H9z" fill="#632a16" />
          <path d="M9 6h3v3H9zM0 12h3v3H0zM15 9h3v3h-3z" fill="#501e0d" />
        </pattern>
      </defs>

      {/* base plate */}
      <g stroke="#000" strokeWidth="3">
        <path d="M137 1750L785 1942Q880 1970 1010 1922L1492 1608Q1523 1590 1523 1562Q1523 1534 1480 1515L1120 1405L700 1275L450 1422L115 1643Q71 1662 71 1690Q75 1725 137 1750Z" fill="#00f200" />
        <path d="M137 1750L785 1942L790 2088L143 1895Z" fill="#00ea00" />
        <path d="M71 1690Q75 1725 137 1750L143 1895Q77 1868 77 1835Z" fill="url(#rust)" />
        <path d="M1010 1922L1492 1608L1498 1750L1016 2062Z" fill="#008000" />
        <path d="M1492 1608Q1523 1590 1523 1562L1531 1710Q1528 1732 1498 1750Z" fill="#43180b" />
        <path d="M785 1942Q880 1970 1010 1922L1016 2062Q893 2118 790 2088Z" fill="url(#rust)" />
      </g>

      {/* centre shaft and pillars */}
      <path d="M547 1400L553 1630C565 1775 1030 1770 1040 1620L1032 1400Z" fill="url(#steel)" />
      <path d="M553 1630C565 1775 1030 1770 1040 1620" fill="none" stroke="#000" strokeWidth="3" />
      <path d="M93 1290L109 1680A122 60 -2 0 0 352 1680L338 1290Z" fill="url(#yellow)" />
      <path d="M1228 1200L1240 1565A122 60 -2 0 0 1484 1562L1462 1120Z" fill="url(#yellow)" />
      <path d="M741 1480L757 1880A122 60 -2 0 0 1000 1875L984 1450Z" fill="url(#yellow)" />
      <g fill="none" stroke="#000" strokeWidth="3">
        <path d="M109 1680A122 60 -2 0 0 352 1680" />
        <path d="M1240 1565A122 60 -2 0 0 1484 1562" />
        <path d="M757 1880A122 60 -2 0 0 1000 1875" />
      </g>

      {/* top plate */}
      <g stroke="#000" strokeWidth="3">
        <path d="M108 1177L755 1368Q850 1391 983 1345L1462 1035Q1496 1015 1496 982Q1494 950 1440 933L1080 826L760 735L435 842L75 1070Q43 1090 43 1117Q46 1152 108 1177Z" fill="#f00000" />
        <path d="M108 1177L755 1368L760 1510L113 1317Z" fill="#00ea00" />
        <path d="M43 1117Q46 1152 108 1177L113 1317Q52 1295 49 1268Z" fill="url(#rust)" />
        <path d="M983 1345L1462 1035L1468 1180L988 1485Z" fill="#008000" />
        <path d="M1462 1035Q1496 1015 1496 982L1502 1132Q1500 1157 1468 1180Z" fill="#43180b" />
        <path d="M755 1368Q850 1391 983 1345L988 1485Q865 1542 760 1510Z" fill="url(#rust)" />
        <ellipse cx="203" cy="1111" rx="81" ry="36" fill="url(#bore)" />
        <ellipse cx="1333" cy="993" rx="81" ry="36" fill="url(#bore)" />
        <ellipse cx="850" cy="1306" rx="81" ry="36" fill="url(#bore)" />
      </g>

      {/* boss, collar and rounded cap */}
      <path d="M430 700L444 1060C455 1250 1080 1240 1091 1040L1077 690Z" fill="url(#blue)" />
      <path d="M430 745L444 1060C455 1250 1080 1240 1091 1040L1077 710" fill="none" stroke="#000" strokeWidth="3" />
      <path d="M330 330L343 640C350 860 1140 855 1151 615L1138 310Z" fill="url(#collar)" stroke="#000" strokeWidth="3" />
      <path d={CAP} fill="url(#dome)" />
      <path d={CAP} fill="url(#domeShade)" />
      <path d="M330 320V350C330 430 500 517 715 517C910 517 1110 430 1138 330V305" fill="none" stroke="#000" strokeWidth="3" />
      <g stroke="#000" strokeWidth="3">
        <ellipse cx="726" cy="189" rx="242" ry="109" transform="rotate(-3 726 189)" fill="#00f200" />
        <ellipse cx="726" cy="190" rx="179" ry="80" transform="rotate(-3 726 190)" fill="url(#well)" />
      </g>

      {/* spin centre */}
      <g strokeWidth="3" shapeRendering="auto">
        <path d="M763 981V914" stroke="#4fe08a" />
        <path d="M763 981L825 999" stroke="#e04a6a" />
        <path d="M763 981L720 1010" stroke="#7fe6f5" />
        <circle cx="762" cy="914" r="7" fill="#2fd45a" />
        <circle cx="825" cy="999" r="8" fill="#ea2a4a" />
        <circle cx="720" cy="1010" r="9" fill="#2fe4f5" />
      </g>
    </svg>
  )
}

/* ---------- Status bar ---------- */

function StatusBar() {
  return (
    <footer className="flex h-[34px] shrink-0 items-center border-t border-[#b1b3b9] bg-white pl-1.5 text-[11px] text-[#4a4a50]">
      <button type="button" aria-label="Toggle tree" className="flex size-[22px] items-center justify-center border border-[#b5b5b8] bg-[#dededf]">
        <Icon name="treeTab" />
      </button>
      <button type="button" aria-label="Toggle browser" className="ml-1.5"><Icon name="globe" className="size-[17px]" /></button>
      <button type="button" aria-label="Full screen" className="ml-2.5"><Icon name="screen" /></button>
      <span className="ml-3 h-[22px] w-px bg-[#c8c9ce]" />
      <span className="ml-1.5 size-[5px] rounded-full bg-[#1d6587]" />
      <p className="ml-[5px]">EXERCISE-172 has been saved.</p>

      <div className="ml-auto flex items-center gap-1">
        <span className="h-[26px] w-px bg-[#c8c9ce]" />
        <span className="h-[26px] w-px bg-[#c8c9ce]" />
        <div className="flex h-6 w-[43px] border border-[#b8b9be]">
          <button type="button" aria-label="Find" className="flex w-[27px] items-center justify-center border-r border-[#b8b9be]">
            <Icon name="binoculars" />
          </button>
          <button type="button" aria-label="Find options" className="flex grow items-center justify-center">
            <Caret />
          </button>
        </div>
        <span className="h-[26px] w-px bg-[#c8c9ce]" />
      </div>

      <label className="relative mr-[18px] ml-[88px] flex h-[23px] w-[165px]">
        <span className="sr-only">Selection filter</span>
        <select className="w-full appearance-none border border-[#a9abb0] bg-[#f8f8f9] px-2 outline-none">
          <option>Geometry</option>
          <option>Datums</option>
          <option>Features</option>
        </select>
        <span className="pointer-events-none absolute inset-y-0 right-0 flex w-4 items-center justify-center border-l border-[#a9abb0]">
          <Caret />
        </span>
      </label>
    </footer>
  )
}

export default function App() {
  return (
    <div className="flex min-h-screen flex-col bg-white font-['Noto_Sans','Open_Sans',sans-serif]">
      <TitleBar />
      <TabBar />
      <Ribbon />
      <div className="flex grow">
        <Sidebar />
        <main className="flex grow flex-col items-center bg-[#e7e9ee]">
          <ViewToolbar />
          <Part />
        </main>
      </div>
      <StatusBar />
    </div>
  )
}
